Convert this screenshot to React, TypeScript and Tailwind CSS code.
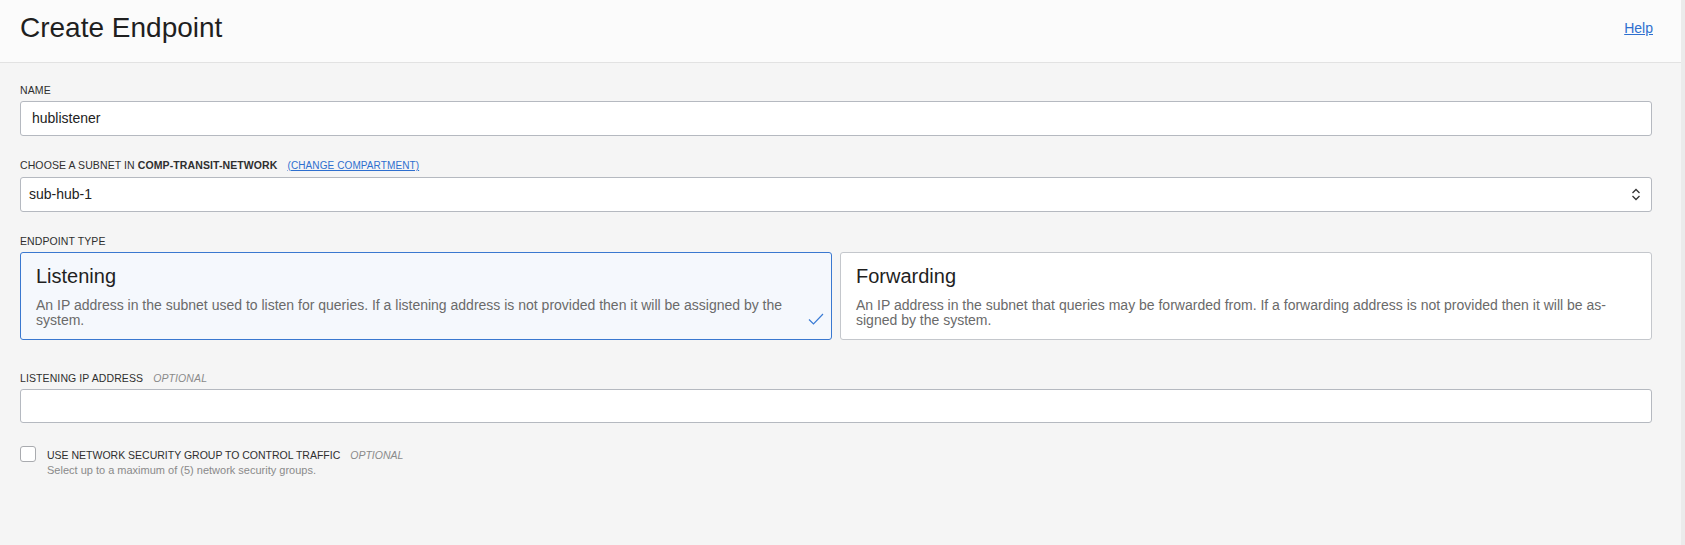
import React from "react";

const font = { fontFamily: '"Liberation Sans", Arial, Helvetica, sans-serif' };

// small uppercase form label
const Label = ({ children }: { children: React.ReactNode }) => (
  <div className="text-[10.5px] leading-[14px] text-[#2f2f2f] tracking-[0.1px] mb-[4px]">{children}</div>
);

const Optional = () => (
  <span className="ml-[10px] italic text-[#8a8a8a] text-[10.5px]">OPTIONAL</span>
);

const Card = ({
  title,
  selected,
  children,
}: {
  title: string;
  selected?: boolean;
  children: React.ReactNode;
}) => (
  <div
    className={
      selected
        ? "relative rounded-[3px] border border-[#3a78d0] bg-[#f5f8fd] pl-[15px] pr-[20px] pt-[11px] pb-[11px]"
        : "relative rounded-[3px] border border-[#c4c7cc] bg-white pl-[15px] pr-[20px] pt-[11px] pb-[11px]"
    }
  >
    <div className="text-[20px] leading-[24px] text-[#1f1f1f]">{title}</div>
    <div className="mt-[10px] text-[14px] leading-[15px] text-[#6a6a6a] whitespace-nowrap">{children}</div>
    {selected && (
      <svg className="absolute right-[7px] bottom-[14px]" width="16" height="12" viewBox="0 0 16 12" fill="none">
        <path d="M1 6.5 L5.5 11 L15 1" stroke="#3a7bd5" strokeWidth="1.2" />
      </svg>
    )}
  </div>
);

export default function App() {
  return (
    <div className="flex h-[545px] w-full bg-[#f5f5f5]" style={font}>
      <div className="flex-1 flex flex-col">
        {/* Header */}
        <header className="h-[63px] bg-[#fbfbfb] border-b border-[#e2e2e2] flex items-center justify-between pl-[20px] pr-[28px]">
          <h1 className="text-[28px] leading-[32px] text-[#1f1f1f] mt-[-6px]">Create Endpoint</h1>
          <a className="text-[14px] text-[#2e6fcf] underline mt-[-6px]" href="#">
            Help
          </a>
        </header>

        {/* Form */}
        <div className="pl-[20px] pr-[29px] pt-[20px]">
          <Label>NAME</Label>
          <div className="h-[35px] rounded-[3px] border border-[#b5b9c0] bg-white flex items-center pl-[11px] text-[14px] text-[#222]">
            hublistener
          </div>

          <div className="mt-[22px]">
            <Label>
              CHOOSE A SUBNET IN <span className="font-bold">COMP-TRANSIT-NETWORK</span>
              <a href="#" className="ml-[10px] text-[10px] text-[#2e6fcf] underline">
                (CHANGE COMPARTMENT)
              </a>
            </Label>
            <div className="h-[35px] rounded-[3px] border border-[#b5b9c0] bg-white flex items-center justify-between pl-[8px] pr-[10px] text-[14px] text-[#222]">
              <span>sub-hub-1</span>
              <svg width="10" height="15" viewBox="0 0 10 15" fill="none">
                <path d="M1.5 6 L5 2.5 L8.5 6" stroke="#333" strokeWidth="1.3" />
                <path d="M1.5 9 L5 12.5 L8.5 9" stroke="#333" strokeWidth="1.3" />
              </svg>
            </div>
          </div>

          <div className="mt-[22px]">
            <Label>ENDPOINT TYPE</Label>
            <div className="grid grid-cols-2 gap-[8px] mt-[1px]">
              <Card title="Listening" selected>
                An IP address in the subnet used to listen for queries. If a listening address is not provided then it will be assigned by the
                <br />
                system.
              </Card>
              <Card title="Forwarding">
                An IP address in the subnet that queries may be forwarded from. If a forwarding address is not provided then it will be as-
                <br />
                signed by the system.
              </Card>
            </div>
          </div>

          <div className="mt-[31px]">
            <Label>
              LISTENING IP ADDRESS
              <Optional />
            </Label>
            <div className="h-[34px] rounded-[3px] border border-[#b5b9c0] bg-white mt-[4px]" />
          </div>

          <div className="mt-[23px] flex items-start gap-[11px]">
            <div className="w-[16px] h-[16px] rounded-[3px] border border-[#a9abaf] bg-white shrink-0" />
            <div className="pt-[2px]">
              <div className="text-[10.5px] leading-[14px] text-[#2f2f2f]">
                USE NETWORK SECURITY GROUP TO CONTROL TRAFFIC
                <Optional />
              </div>
              <div className="text-[11px] leading-[15px] text-[#8a8a8a] mt-[1px]">
                Select up to a maximum of (5) network security groups.
              </div>
            </div>
          </div>
        </div>
      </div>
      {/* scroll track edge */}
      <div className="w-[4px] bg-[#ebebeb]" />
    </div>
  );
}
